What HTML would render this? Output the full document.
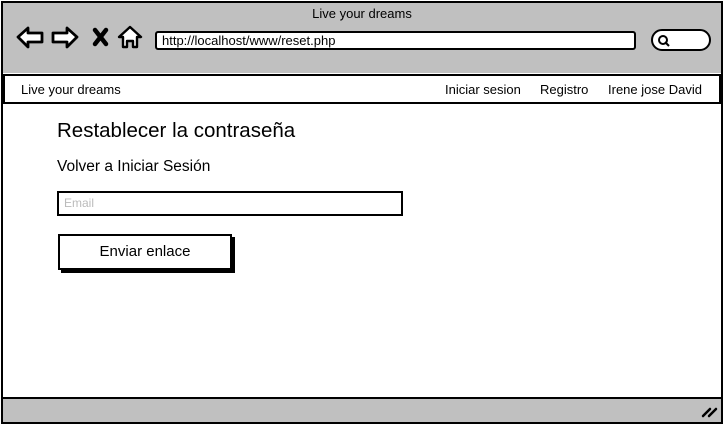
<!DOCTYPE html>
<html><head><meta charset="utf-8"><style>
*{margin:0;padding:0;box-sizing:border-box}
body{width:724px;height:425px;background:#fff;font-family:"Liberation Sans",sans-serif;position:relative;overflow:hidden;color:#000}
.frame{position:absolute;left:1px;top:1px;width:722px;height:423px;border:2px solid #000;background:#fff}
.top{position:absolute;left:1px;top:1px;width:722px;height:72px;background:#c0c0c0;border:2px solid #000;border-bottom:none}
.title{position:absolute;top:6px;left:0;width:724px;text-align:center;font-size:13px}
.url{position:absolute;left:155px;top:31px;width:481px;height:19px;background:#fff;border:2px solid #000;border-radius:3px;font-size:13px;padding-left:5px;line-height:15px}
.search{position:absolute;left:651px;top:29px;width:60px;height:22px;background:#fff;border:2px solid #000;border-radius:11px}
.nav{position:absolute;left:3px;top:74px;width:718px;height:30px;border:2px solid #000;background:#fff;font-size:13px;line-height:27px}
.nav span{position:absolute;top:0}
.bottom{position:absolute;left:1px;top:397px;width:722px;height:27px;background:#c0c0c0;border:2px solid #000}
h1{position:absolute;left:57px;top:119px;font-size:20.5px;font-weight:normal}
.back{position:absolute;left:57px;top:158px;font-size:15.5px}
.email{position:absolute;left:57px;top:191px;width:346px;height:25px;border:2px solid #000;font-size:12px;color:#bbb;padding-left:5px;line-height:21px}
.btn{position:absolute;left:58px;top:234px;width:174px;height:36px;border:2px solid #000;box-shadow:3px 3px 0 #000;font-size:15px;text-align:center;line-height:32px}
</style></head><body>
<div class="frame"></div>
<div class="top"></div>
<div class="title">Live your dreams</div>
<svg style="position:absolute;left:15px;top:25px" width="130" height="28" viewBox="0 0 130 28">
<path d="M3 12 L13 3 L13 8 L27 8 L27 17 L13 17 L13 22 Z" fill="#fff" stroke="#000" stroke-width="2.8" stroke-linejoin="round"/>
<path d="M62 12 L52 3 L52 8 L38 8 L38 17 L52 17 L52 22 Z" fill="#fff" stroke="#000" stroke-width="2.8" stroke-linejoin="round"/>
<path d="M80 5 L91 19 M91 5 L80 19" stroke="#000" stroke-width="4.5" stroke-linecap="round"/>
<path d="M104 12 L115 2 L126 12 L122 12 L122 22 L118 22 L118 16 L112 16 L112 22 L108 22 L108 12 Z" fill="#fff" stroke="#000" stroke-width="2.4" stroke-linejoin="round"/>
</svg>
<div class="url">http://localhost/www/reset.php</div>
<div class="search"><svg style="position:absolute;left:4px;top:3px" width="14" height="14"><circle cx="6" cy="6" r="4" fill="none" stroke="#000" stroke-width="2"/><path d="M8 8 L12 12" stroke="#000" stroke-width="2"/></svg></div>
<div class="nav">
<span style="left:16px">Live your dreams</span>
<span style="left:440px">Iniciar sesion</span>
<span style="left:535px">Registro</span>
<span style="left:603px">Irene jose David</span>
</div>
<h1>Restablecer la contraseña</h1>
<div class="back">Volver a Iniciar Sesión</div>
<div class="email">Email</div>
<div class="btn">Enviar enlace</div>
<div class="bottom"></div>
<svg style="position:absolute;left:700px;top:404px" width="20" height="14"><path d="M3 12 L10 5 M9 12 L16 5" stroke="#000" stroke-width="2.5" stroke-linecap="round"/></svg>
</body></html>
